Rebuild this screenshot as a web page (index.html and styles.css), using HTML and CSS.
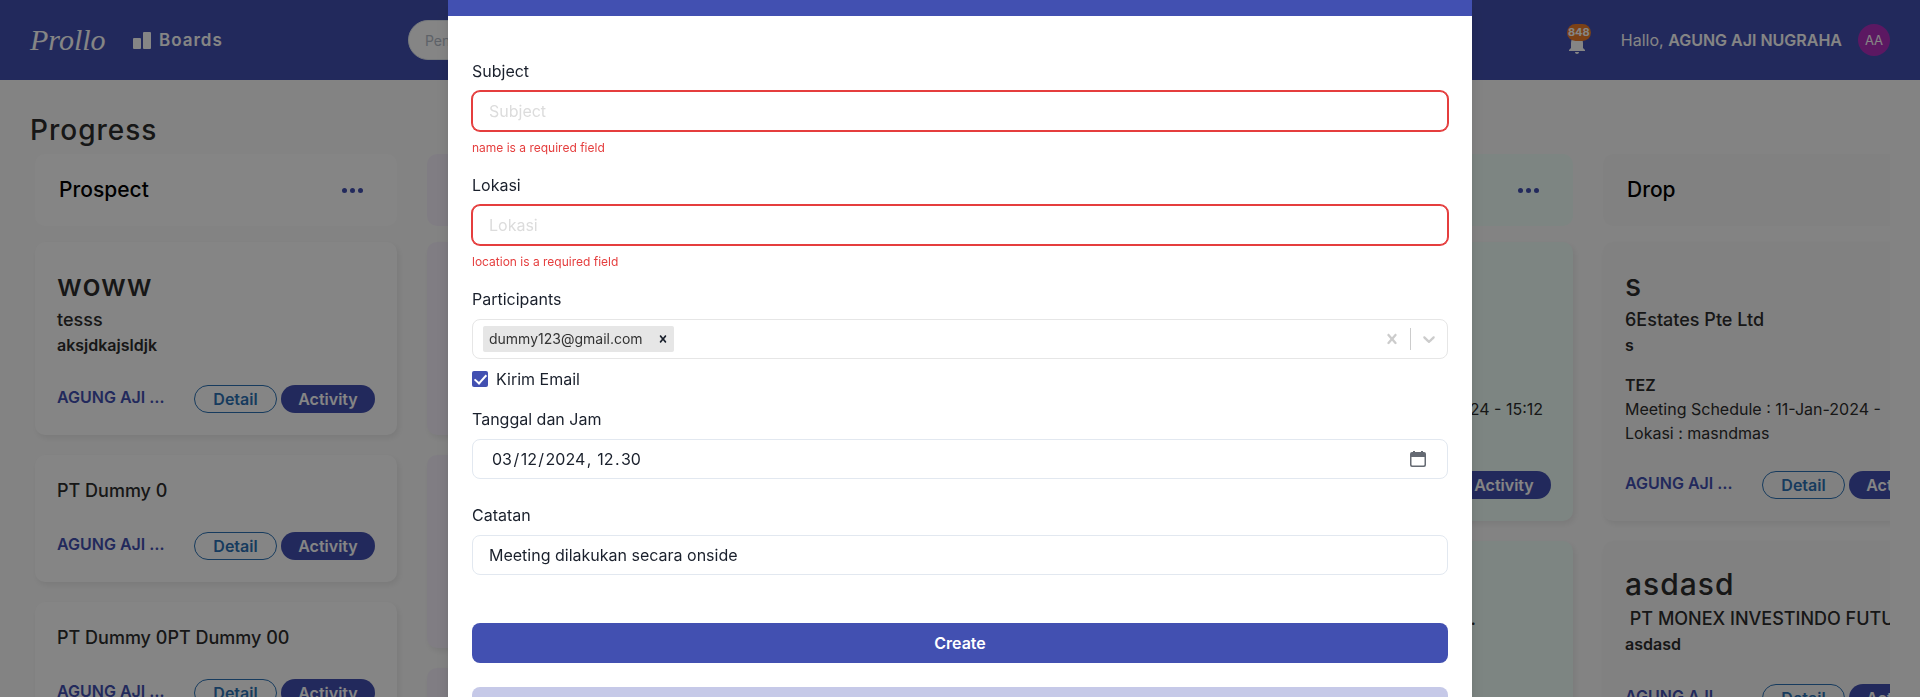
FILE: index.html
```html
<!DOCTYPE html>
<html lang="id">
<head>
<meta charset="utf-8">
<title>Prollo</title>
<link rel="stylesheet" href="styles.css">
</head>
<body>
<header class="topbar">
  <a class="logo" href="#">Prollo</a>
  <a class="nav-link" href="#">
    <svg width="18" height="18" viewBox="0 0 18 18" fill="currentColor" aria-hidden="true"><rect x="0" y="7" width="8" height="11" rx="1"/><rect x="10" y="1" width="8" height="17" rx="1"/></svg>
    Boards
  </a>
  <input class="search" type="search" placeholder="Pencarian" aria-label="Pencarian">
  <div class="account">
    <button class="bell" type="button" aria-label="Notifikasi">
      <svg width="16" height="20" viewBox="0 0 16 20" fill="currentColor" aria-hidden="true"><path d="M8 20c1.100 0 2-.9 2-2H6c0 1.100.9 2 2 2zM14 14V9c0-3.100-1.600-5.600-4.500-6.300V2a1.500 1.500 0 0 0-3 0v.7C3.600 3.400 2 5.900 2 9v5l-2 2v1h16v-1z"/></svg>
      <span class="badge">848</span>
    </button>
    <span class="greeting">Hallo, <b>AGUNG AJI NUGRAHA</b></span>
    <span class="avatar">AA</span>
  </div>
</header>

<main class="page">
  <h1 class="page-title">Progress</h1>
  <div class="board">
    <section class="column">
      <div class="column-head"><h2>Prospect</h2><button class="more" type="button" aria-label="Menu"><i></i><i></i><i></i></button></div>
      <article class="card">
        <h3 class="card-title">woww</h3>
        <p class="company">tesss</p>
        <p class="note">aksjdkajsldjk</p>
        <div class="card-foot"><span class="owner">AGUNG AJI …</span><button class="pill outline" type="button">Detail</button><button class="pill solid" type="button">Activity</button></div>
      </article>
      <article class="card">
        <p class="company">PT Dummy 0</p>
        <div class="card-foot"><span class="owner">AGUNG AJI …</span><button class="pill outline" type="button">Detail</button><button class="pill solid" type="button">Activity</button></div>
      </article>
      <article class="card">
        <p class="company">PT Dummy 0PT Dummy 00</p>
        <div class="card-foot"><span class="owner">AGUNG AJI …</span><button class="pill outline" type="button">Detail</button><button class="pill solid" type="button">Activity</button></div>
      </article>
    </section>

    <section class="column purple">
      <div class="column-head"></div>
      <article class="card medium"></article>
      <article class="card medium"></article>
      <article class="card medium"></article>
    </section>

    <section class="column"></section>

    <section class="column green">
      <div class="column-head"><button class="more" type="button" aria-label="Menu"><i></i><i></i><i></i></button></div>
      <article class="card tall">
        <div class="details"><p class="schedule">11-Jan-2024 - 15:12</p></div>
        <div class="card-foot"><button class="pill solid" type="button">Activity</button></div>
      </article>
      <article class="card tall">
        <p class="company short">...</p>
      </article>
    </section>

    <section class="column grey">
      <div class="column-head"><h2>Drop</h2></div>
      <article class="card">
        <h3 class="card-title">s</h3>
        <p class="company">6Estates Pte Ltd</p>
        <p class="note">s</p>
        <div class="details"><p><b>TEZ</b></p><p>Meeting Schedule : 11-Jan-2024 -</p><p>Lokasi : masndmas</p></div>
        <div class="card-foot"><span class="owner">AGUNG AJI …</span><button class="pill outline" type="button">Detail</button><button class="pill solid" type="button">Activity</button></div>
      </article>
      <article class="card">
        <h3 class="card-title">asdasd</h3>
        <p class="company">&nbsp;PT MONEX INVESTINDO FUTURES</p>
        <p class="note">asdasd</p>
        <div class="card-foot"><span class="owner">AGUNG AJI …</span><button class="pill outline" type="button">Detail</button><button class="pill solid" type="button">Activity</button></div>
      </article>
    </section>
  </div>
</main>

<div class="overlay">
  <div class="modal" role="dialog" aria-modal="true" aria-label="Create">
    <div class="modal-bar"></div>
    <form class="form">
      <div class="field">
        <label for="subject">Subject</label>
        <input class="control invalid" id="subject" type="text" placeholder="Subject">
        <p class="error">name is a required field</p>
      </div>
      <div class="field">
        <label for="lokasi">Lokasi</label>
        <input class="control invalid" id="lokasi" type="text" placeholder="Lokasi">
        <p class="error">location is a required field</p>
      </div>
      <div class="field">
        <label for="participants">Participants</label>
        <div class="control multi">
          <span class="tag">dummy123@gmail.com
            <button class="icon-btn" type="button" aria-label="Remove"><svg width="14" height="14" viewBox="0 0 20 20" fill="currentColor"><path d="M14.348 14.849c-0.469 0.469-1.229 0.469-1.697 0l-2.651-3.030-2.651 3.029c-0.469 0.469-1.229 0.469-1.697 0-0.469-0.469-0.469-1.229 0-1.697l2.758-3.150-2.759-3.152c-0.469-0.469-0.469-1.228 0-1.697s1.228-0.469 1.697 0l2.652 3.031 2.651-3.031c0.469-0.469 1.228-0.469 1.697 0s0.469 1.229 0 1.697l-2.758 3.152 2.758 3.150c0.469 0.469 0.469 1.229 0 1.698z"/></svg></button>
          </span>
          <input class="multi-input" id="participants" type="text">
          <button class="icon-btn indicator" type="button" aria-label="Clear"><svg width="20" height="20" viewBox="0 0 20 20" fill="currentColor"><path d="M14.348 14.849c-0.469 0.469-1.229 0.469-1.697 0l-2.651-3.030-2.651 3.029c-0.469 0.469-1.229 0.469-1.697 0-0.469-0.469-0.469-1.229 0-1.697l2.758-3.150-2.759-3.152c-0.469-0.469-0.469-1.228 0-1.697s1.228-0.469 1.697 0l2.652 3.031 2.651-3.031c0.469-0.469 1.228-0.469 1.697 0s0.469 1.229 0 1.697l-2.758 3.152 2.758 3.150c0.469 0.469 0.469 1.229 0 1.698z"/></svg></button>
          <span class="separator"></span>
          <button class="icon-btn indicator" type="button" aria-label="Open"><svg width="20" height="20" viewBox="0 0 20 20" fill="currentColor"><path d="M4.516 7.548c0.436-0.446 1.043-0.481 1.576 0l3.908 3.747 3.908-3.747c0.533-0.481 1.141-0.446 1.574 0 0.436 0.445 0.408 1.197 0 1.615-0.406 0.418-4.695 4.502-4.695 4.502-0.217 0.223-0.502 0.335-0.787 0.335s-0.570-0.112-0.789-0.335c0 0-4.287-4.084-4.695-4.502s-0.436-1.170 0-1.615z"/></svg></button>
        </div>
        <label class="check"><input type="checkbox" checked>Kirim Email</label>
      </div>
      <div class="field">
        <label for="tanggal">Tanggal dan Jam</label>
        <div class="control date">
          <input class="date-input" id="tanggal" type="text" value="03&#8202;/&#8202;12&#8202;/&#8202;2024&#8202;,&#8201;&#8201;12&#8202;.&#8202;30">
          <button class="icon-btn calendar" type="button" aria-label="Kalender"><svg width="16" height="16" viewBox="0 0 16 16" aria-hidden="true"><path fill="currentColor" d="M3 0h2v1h6V0h2v1h1a2 2 0 0 1 2 2v11a2 2 0 0 1-2 2H2a2 2 0 0 1-2-2V3a2 2 0 0 1 2-2h1zM1.500 6v7.500a1 1 0 0 0 1 1h11a1 1 0 0 0 1-1V6z"/></svg></button>
        </div>
      </div>
      <div class="field notes">
        <label for="catatan">Catatan</label>
        <input class="control" id="catatan" type="text" value="Meeting dilakukan secara onside">
      </div>
      <div class="actions">
        <button class="action primary" type="submit">Create</button>
        <button class="action secondary" type="button" aria-label="Cancel"></button>
      </div>
    </form>
  </div>
</div>
</body>
</html>
```
FILE: styles.css
```css
* { box-sizing: border-box; }
html, body { height: 100%; }
body {
  margin: 0;
  overflow: hidden;
  font: 16px/24px Inter, "Open Sans", sans-serif;
  color: #1a202c;
  background: #fcfcfc;
}
h1, h2, h3, p { margin: 0; font-weight: 500; }
button, input { font: inherit; color: inherit; }
button { border: 0; padding: 0; background: none; cursor: pointer; }
a { color: inherit; text-decoration: none; }

/* Top bar */
.topbar {
  display: flex;
  align-items: center;
  height: 80px;
  padding: 0 30px;
  background: #4250b1;
  color: #fff;
}
.logo { font: italic 30px/40px "Liberation Serif", serif; width: 76px; }
.nav-link {
  display: flex;
  flex: none;
  box-sizing: content-box;
  align-items: center;
  gap: 8px;
  width: 275px;
  padding-left: 27px;
  font-size: 17px;
  font-weight: 600;
  letter-spacing: 1px;
}
.search {
  width: 400px;
  height: 40px;
  padding: 0 16px;
  border: 1px solid #e2e8f0;
  border-radius: 20px;
  background: #fff;
  font-size: 14px;
}
.search::placeholder { color: #b4bcc8; opacity: 1; }
.account { display: flex; align-items: center; gap: 16px; margin-left: auto; }
.bell { position: relative; height: 32px; width: 24px; margin-right: 14px; }
.bell svg { display: block; margin: 7px 0 0 2px; }
.badge {
  position: absolute;
  left: 0;
  top: 0;
  width: 24px;
  border-radius: 9px;
  background: #ed7d2b;
  font-size: 11px;
  line-height: 17px;
  font-weight: 700;
  text-align: center;
}
.greeting b { font-weight: 600; }
.avatar {
  width: 32px;
  border-radius: 50%;
  background: #b12fbd;
  font-size: 13px;
  line-height: 32px;
  text-align: center;
}

/* Board */
.page { padding: 29px 30px 0; }
.page-title { font-size: 28px; line-height: 42px; letter-spacing: 1px; color: #2d2d2d; }
.board { display: flex; gap: 30px; margin-top: 3px; padding-left: 5px; overflow: hidden; }
.column { --tint: #fff; flex: 0 0 362px; }
.purple { --tint: #f5f0fb; }
.green { --tint: #effff9; }
.grey { --tint: #f8f8f8; }
.column-head {
  display: flex;
  align-items: center;
  height: 72px;
  margin-bottom: 16px;
  padding: 0 34px 0 24px;
  border-radius: 10px;
  background: var(--tint);
  color: #000;
}
.column-head h2 { font-size: 21px; line-height: 30px; }
.more { display: flex; gap: 3px; margin-left: auto; }
.more i { width: 5px; height: 5px; border-radius: 50%; background: #4250b1; }
.card {
  margin-bottom: 20px;
  padding: 22px;
  border-radius: 10px;
  background: var(--tint);
  box-shadow: 2px 3px 6px rgba(0, 0, 0, .08);
  color: #2d2d2d;
  white-space: nowrap;
}
.medium { height: 193px; }
.tall { display: flex; flex-direction: column; height: 279px; }
.tall .details { margin-top: auto; }
.card-title { font-size: 30px; line-height: 42px; letter-spacing: 1px; }
.company { font-size: 18px; line-height: 27px; }
.tall .short { margin-top: 42px; padding-right: 75px; text-align: right; }
.note { font-weight: 600; padding-bottom: 2px; }
.details { margin-top: 14px; }
.details p { font-weight: 400; }
.details b { font-weight: 600; }
.tall .schedule { margin-bottom: 24px; padding-right: 8px; text-align: right; }
.card-foot { display: flex; justify-content: flex-end; gap: 4px; margin-top: 26px; }
.company + .card-foot { margin-top: 28px; }
.owner { margin-right: auto; font-weight: 600; color: #4250b1; }
.pill { height: 28px; border-radius: 14px; font-weight: 600; }
.outline { width: 83px; border: 1px solid #2c72b5; color: #2c72b5; }
.solid { width: 94px; background: #4250b1; color: #fff; }

/* Dialog */
.overlay {
  position: fixed;
  inset: 0;
  display: flex;
  justify-content: center;
  align-items: flex-start;
  overflow: hidden;
  background: rgba(0, 0, 0, .48);
}
.modal {
  width: 1024px;
  max-width: 100%;
  background: #fff;
  box-shadow: 0 10px 15px rgba(0, 0, 0, .1), 0 4px 6px rgba(0, 0, 0, .05);
}
.modal-bar { height: 16px; background: #4250b1; }
.form { display: grid; gap: 16px; padding: 43px 24px 24px; }
.field { display: grid; gap: 8px; }
.control {
  width: 100%;
  height: 40px;
  padding: 0 16px;
  border: 1px solid #e2e8f0;
  border-radius: 8px;
  background: #fff;
  outline: 0;
}
.control::placeholder { color: #dcdcdc; opacity: 1; }
.invalid { border-color: #e53e3e; box-shadow: 0 0 0 1px #e53e3e; }
.error { font-size: 12px; line-height: 18px; font-weight: 400; color: #e53e3e; }
.multi { display: flex; align-items: center; padding: 0 8px 0 10px; border-color: #e6e6e6; }
.tag {
  display: flex;
  align-items: center;
  gap: 13px;
  height: 26px;
  padding: 0 4px 0 6px;
  border-radius: 2px;
  background: #e6e6e6;
  color: #333;
  font-size: 14px;
}
.tag .icon-btn { color: #1a202c; }
.multi-input { flex: 1; min-width: 0; border: 0; outline: 0; background: none; }
.icon-btn { display: flex; }
.indicator { color: #ccc; padding: 0 8px; }
.multi .indicator:last-child { padding-right: 0; }
.separator { width: 1px; height: 22px; background: #ccc; }
.check { display: flex; align-items: center; gap: 8px; }
.check input {
  appearance: none;
  width: 16px;
  height: 16px;
  margin: 0;
  border-radius: 2px;
  background: #4250b1;
  display: grid;
  place-items: center;
}
.check input::after {
  content: "";
  width: 5px;
  height: 10px;
  margin-bottom: 2px;
  border: solid #fff;
  border-width: 0 2px 2px 0;
  transform: rotate(42deg);
}
.date { display: flex; align-items: center; padding: 0 21px 0 19px; }
.date-input { flex: 1; min-width: 0; border: 0; padding: 0; outline: 0; background: none; }
.calendar { color: #656a73; }
.notes { margin-top: 8px; }
.actions { display: grid; gap: 24px; margin-top: 32px; }
.action { height: 40px; border-radius: 8px; font-weight: 600; }
.primary { background: #4250b1; color: #fff; }
.secondary { background: #c6c9e8; }
```
